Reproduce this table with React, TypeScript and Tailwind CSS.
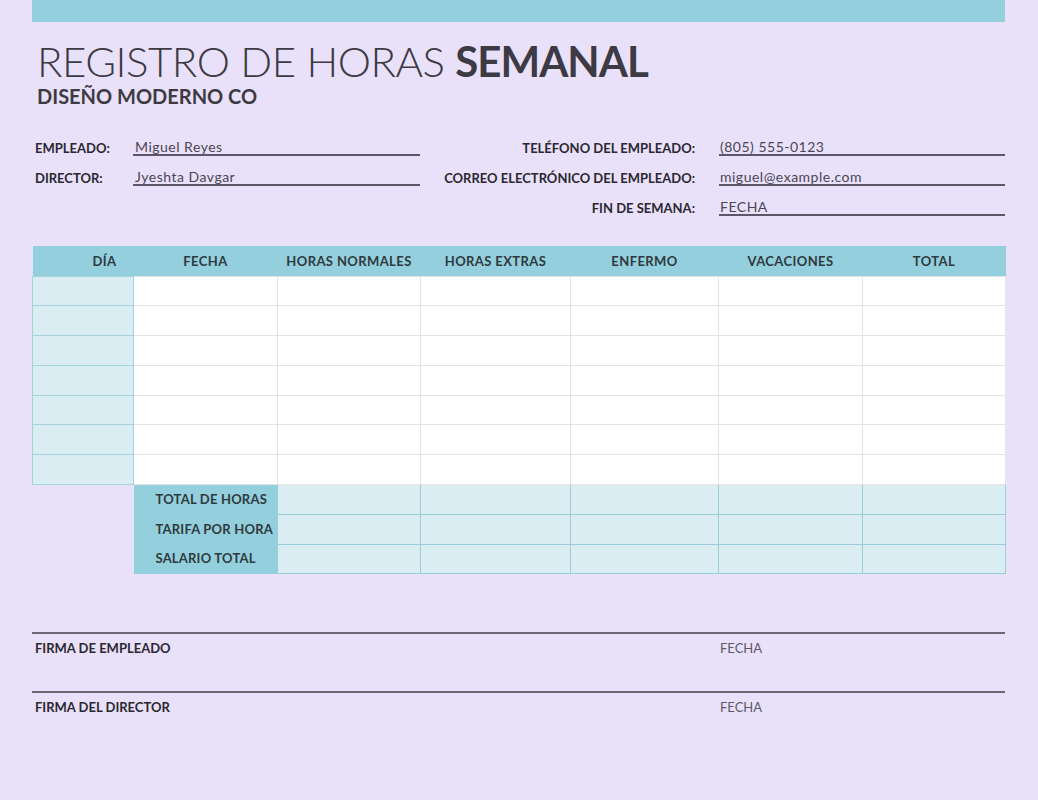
import React from 'react';

const font = { fontFamily: '"Century Gothic", Lato, "Liberation Sans", sans-serif' };

const columns = ['DÍA', 'FECHA', 'HORAS NORMALES', 'HORAS EXTRAS', 'ENFERMO', 'VACACIONES', 'TOTAL'];
const widths = [101, 144, 143, 150, 148, 144, 143];

const InfoRow = ({ left, leftValue, right, rightValue }: { left?: string; leftValue?: string; right: string; rightValue: string }) => (
  <div className="grid grid-cols-[101px_287px_275px_24px_286px] h-[30px] items-end">
    <div className="text-[13px] leading-[16px] font-bold text-[#2a2830] pl-[3px]">{left}</div>
    <div
      className={`h-full flex items-end pl-[2px] text-[14px] leading-[15px] tracking-[0.5px] text-[#4a4653] ${
        left ? 'border-b-2 border-[#5c5766]' : ''
      }`}
    >
      {leftValue}
    </div>
    <div className="text-[13px] leading-[16px] font-bold text-[#2a2830] text-right">{right}</div>
    <div />
    <div className="h-full flex items-end pl-[1px] text-[14px] leading-[15px] tracking-[0.5px] text-[#4a4653] border-b-2 border-[#5c5766]">
      {rightValue}
    </div>
  </div>
);

export default function App() {
  return (
    <div className="w-[1038px] h-[800px] bg-[#e9e1f9] overflow-hidden" style={font}>
      <div className="ml-[32px] w-[973px]">
        <div className="h-[22px] bg-[#93cfdc]" />

        <div className="pl-[5px] pt-[16px]">
          <h1 className="text-[42px] leading-[46px] font-light text-[#3d3a43] tracking-[-0.5px]">
            REGISTRO DE HORAS <span className="font-bold tracking-[-1px]">SEMANAL</span>
          </h1>
          <div className="text-[20px] leading-[24px] font-bold text-[#3d3a43]">DISEÑO MODERNO CO</div>
        </div>

        <div className="mt-[18px]">
          <InfoRow left="EMPLEADO:" leftValue="Miguel Reyes" right="TELÉFONO DEL EMPLEADO:" rightValue="(805) 555-0123" />
          <InfoRow left="DIRECTOR:" leftValue="Jyeshta Davgar" right="CORREO ELECTRÓNICO DEL EMPLEADO:" rightValue="miguel@example.com" />
          <InfoRow right="FIN DE SEMANA:" rightValue="FECHA" />
        </div>

        <table className="mt-[30px] border-collapse table-fixed w-[973px]">
          <colgroup>
            {widths.map((w, i) => (
              <col key={i} style={{ width: w }} />
            ))}
          </colgroup>
          <thead>
            <tr className="h-[30px] bg-[#93cfdc]">
              {columns.map((c, i) => (
                <th
                  key={c}
                  className={`text-[13px] font-bold tracking-[0.4px] text-[#2f3a40] pt-[1px] ${i === 0 ? 'text-right pr-[17px]' : 'text-center'}`}
                >
                  {c}
                </th>
              ))}
            </tr>
          </thead>
          <tbody>
            {Array.from({ length: 7 }).map((_, r) => (
              <tr key={r} className="h-[29.8px]">
                <td className="bg-[#d9edf2] border border-[#a3d4de]" />
                {widths.slice(1).map((_, i) => (
                  <td key={i} className="bg-white border border-[#e4e4e4]" />
                ))}
              </tr>
            ))}
            {['TOTAL DE HORAS', 'TARIFA POR HORA', 'SALARIO TOTAL'].map((label) => (
              <tr key={label} className="h-[29.8px]">
                <td />
                <td className="bg-[#93cfdc] text-[13px] font-bold text-[#2f3a40] pl-[22px] tracking-[0.2px]">{label}</td>
                {widths.slice(2).map((_, i) => (
                  <td key={i} className="bg-[#d9edf2] border border-[#99cdd9]" />
                ))}
              </tr>
            ))}
          </tbody>
        </table>

        <div className="mt-[58px]">
          <div className="border-t-2 border-[#6b6674] h-[59px] flex pt-[5px]">
            <div className="w-[688px] pl-[3px] text-[13px] font-bold text-[#2a2830]">FIRMA DE EMPLEADO</div>
            <div className="text-[13px] text-[#5d5966]">FECHA</div>
          </div>
          <div className="border-t-2 border-[#6b6674] flex pt-[5px]">
            <div className="w-[688px] pl-[3px] text-[13px] font-bold text-[#2a2830]">FIRMA DEL DIRECTOR</div>
            <div className="text-[13px] text-[#5d5966]">FECHA</div>
          </div>
        </div>
      </div>
    </div>
  );
}
